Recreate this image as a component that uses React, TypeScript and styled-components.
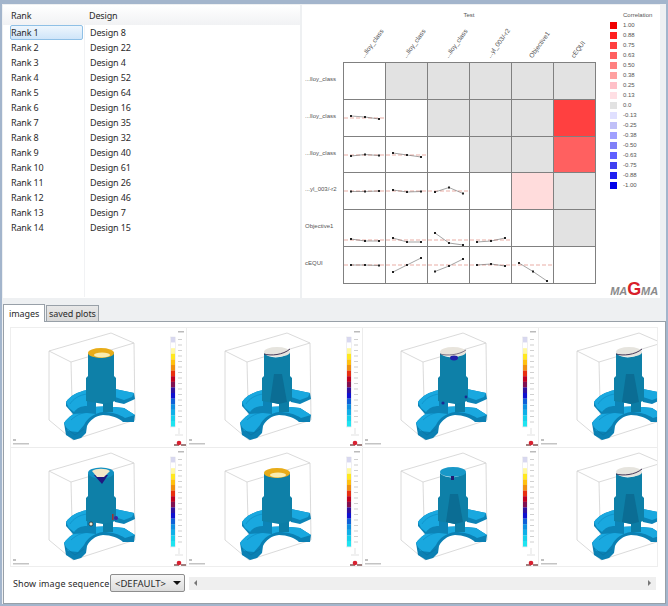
import React from 'react';
import styled, { createGlobalStyle } from 'styled-components';

const GlobalStyle = createGlobalStyle`
    html, body {
        margin: 0;
        padding: 0;
        background: #eef0f2;
    }
`;

const ranks = [8, 22, 4, 52, 64, 16, 35, 32, 40, 61, 26, 46, 7, 15];

const Window = styled.div`
    width: 668px;
    height: 606px;
    box-sizing: border-box;
    border: 2px solid #a3b5cc;
    border-top-width: 4px;
    background: #eef0f2;
    display: flex;
    flex-direction: column;
    font-family: 'Noto Sans', sans-serif;
    color: #2a2a2a;
    overflow: hidden;
`;

const TopRow = styled.div`
    display: flex;
    height: 293px;
    padding: 1px 6px 0 1px;
    gap: 2px;
`;

const TablePanel = styled.div`
    flex: 0 0 297px;
    background: #fff;
    font-size: 9px;
    letter-spacing: -0.15px;
`;

const HeaderRow = styled.div`
    display: flex;
    height: 20px;
    align-items: center;
    background: linear-gradient(#fff, #f1f2f4);
`;

const RankCell = styled.div`
    width: 82px;
    box-sizing: border-box;
    padding-left: 8px;
`;

const DesignCell = styled.div`
    flex: 1;
    padding-left: 4px;
`;

const Columns = styled.div`
    display: flex;
    height: 272px;
`;

const RankColumn = styled.div`
    width: 82px;
    border-right: 1px solid #f1f2f4;
    padding: 0 0 0 7px;
    box-sizing: border-box;
`;

const DesignColumn = styled.div`
    padding: 0 0 0 4px;
`;

const ListRow = styled.div<{ $selected?: boolean }>`
    height: 15px;
    box-sizing: border-box;
    width: 73px;
    padding-left: ${(p) => (p.$selected ? '0' : '1px')};
    border: ${(p) => (p.$selected ? '1px solid #8fc0e6' : 'none')};
    border-radius: 2px;
    background: ${(p) => (p.$selected ? 'linear-gradient(#eef6fd, #cfe5f9)' : 'transparent')};
    line-height: ${(p) => (p.$selected ? '13px' : '15px')};
`;

const ChartPanel = styled.div`
    flex: 1;
    min-width: 0;
    background: #fff;
    display: flex;
    font-family: 'Liberation Sans', sans-serif;
    font-size: 6px;
    color: #555;
`;

const MatrixArea = styled.div`
    flex: 0 0 304px;
    display: flex;
    flex-direction: column;
`;

const MatrixTitle = styled.div`
    height: 10px;
    padding-top: 5px;
    margin-left: 41px;
    width: 252px;
    text-align: center;
    line-height: 10px;
`;

const ColumnLabels = styled.div`
    display: flex;
    height: 42px;
    margin-left: 41px;
`;

const ColumnLabel = styled.div`
    width: 42px;
    display: flex;
    align-items: flex-end;
    padding: 0 0 3px 22px;
    box-sizing: border-box;
    white-space: nowrap;
`;

const RotatedText = styled.span`
    display: block;
    width: 0;
    font-size: 6.5px;
    line-height: 7px;
    transform-origin: 0 100%;
    transform: rotate(-54deg);
`;

const MatrixRow = styled.div`
    display: flex;
    height: 36.8px;
`;

const RowLabel = styled.div`
    width: 41px;
    padding: 14px 0 0 3px;
    box-sizing: border-box;
    line-height: 7px;
    white-space: nowrap;
`;

const Cell = styled.div<{ $fill: string }>`
    width: 43px;
    height: 37.8px;
    margin-right: -1px;
    box-sizing: border-box;
    border: 1px solid #808080;
    background: ${(p) => p.$fill};
`;

const LegendArea = styled.div`
    flex: 1;
    min-width: 0;
    display: flex;
    flex-direction: column;
    padding: 5px 0 0 4px;
`;

const LegendTitle = styled.div`
    height: 10px;
    line-height: 10px;
    padding-left: 13px;
`;

const LegendRow = styled.div`
    display: flex;
    align-items: center;
    height: 10px;
    gap: 6px;
`;

const Swatch = styled.div<{ $fill: string }>`
    width: 7px;
    height: 7px;
    background: ${(p) => p.$fill};
`;

const Logo = styled.div`
    margin-top: auto;
    align-self: flex-end;
    margin-right: 2px;
    font-family: 'Liberation Sans', sans-serif;
    font-weight: bold;
    font-style: italic;
    font-size: 11px;
    line-height: 14px;
    letter-spacing: -0.1px;
    white-space: nowrap;
    color: #8b8b8b;
`;

const LogoG = styled.span`
    color: #d8202a;
    font-size: 18px;
    font-style: normal;
`;

const TabStrip = styled.div`
    display: flex;
    align-items: flex-end;
    height: 23px;
    padding-left: 1px;
    gap: 1px;
    font-size: 9px;
    letter-spacing: -0.1px;
`;

const Tab = styled.div<{ $active?: boolean }>`
    height: ${(p) => (p.$active ? '18px' : '16px')};
    line-height: ${(p) => (p.$active ? '17px' : '15px')};
    box-sizing: border-box;
    padding: 0 ${(p) => (p.$active ? '5px' : '2px')};
    border: 1px solid #98a0a8;
    border-bottom: none;
    margin-bottom: ${(p) => (p.$active ? '-1px' : '0')};
    position: relative;
    background: ${(p) => (p.$active ? '#fff' : 'linear-gradient(#e8e8e8, #d8d8d8)')};
`;

const TabBody = styled.div`
    flex: 1;
    margin: 0 0 0 1px;
    background: #fff;
    border: 1px solid #98a0a8;
    padding: 5px 6px 0 6px;
    display: flex;
    flex-direction: column;
`;

const Viewport = styled.div`
    width: 648px;
    height: 240px;
    overflow: hidden;
    display: grid;
    grid-template-columns: repeat(4, 176px);
    grid-template-rows: repeat(2, 120px);
    border: 1px solid #eeeeee;
    box-sizing: border-box;
`;

const Thumb = styled.svg`
    display: block;
    filter: blur(0.35px);
`;

const ControlRow = styled.div`
    display: flex;
    align-items: center;
    height: 18px;
    margin-top: 7px;
    padding-left: 3px;
    font-size: 9.5px;
`;

const SequenceLabel = styled.div`
    width: 97px;
    white-space: nowrap;
    font-size: 9px;
    letter-spacing: 0.1px;
`;

const Select = styled.div`
    width: 75px;
    height: 18px;
    box-sizing: border-box;
    border: 1px solid #8d8d8d;
    border-radius: 2px;
    background: linear-gradient(#f6f6f6, #dcdcdc);
    display: flex;
    align-items: center;
    justify-content: space-between;
    padding: 0 3px 0 4px;
`;

const SelectArrow = styled.span`
    border: 4px solid transparent;
    border-top: 4px solid #111;
    border-bottom: none;
`;

const ScrollBar = styled.div`
    width: 467px;
    height: 13px;
    margin-left: 4px;
    background: #efefef;
    display: flex;
    align-items: center;
    justify-content: space-between;
    padding: 0 5px;
    box-sizing: border-box;
`;

const ArrowLeft = styled.span`
    border: 3px solid transparent;
    border-right: 3px solid #777;
    border-left: none;
`;

const ArrowRight = styled.span`
    border: 3px solid transparent;
    border-left: 3px solid #777;
    border-right: none;
`;

const legend = [
    ['1.00', '#f00000'], ['0.88', '#ff2020'], ['0.75', '#ff4040'], ['0.63', '#ff6060'],
    ['0.50', '#ff8080'], ['0.38', '#ffa0a0'], ['0.25', '#ffc0c8'], ['0.13', '#ffdfe4'],
    ['0.0', '#e2e2e2'], ['-0.13', '#e0e0ff'], ['-0.25', '#c0c0f8'], ['-0.38', '#a0a0ff'],
    ['-0.50', '#8080f8'], ['-0.63', '#6060ff'], ['-0.75', '#4040f0'], ['-0.88', '#2020f0'],
    ['-1.00', '#0000e8'],
];

const columnNames = ['...lloy_class', '...lloy_class', '...lloy_class', '...yl_003/-r2', 'Objective1', 'cEQUI'];
const rowNames = ['...lloy_class', '...lloy_class', '...lloy_class', '...yl_003/-r2', 'Objective1', 'cEQUI'];

// mean line and three sample values for each filled plot, keyed "row-col"
const plots: Record<string, { mean: number; pts: number[] }> = {
    '1-0': { mean: 18, pts: [16, 17, 19] },
    '2-0': { mean: 18, pts: [19, 17.5, 18.5] },
    '2-1': { mean: 18, pts: [16, 18, 20] },
    '3-0': { mean: 18, pts: [18.5, 18.5, 18] },
    '3-1': { mean: 18, pts: [17, 19, 18.5] },
    '3-2': { mean: 18, pts: [19, 14.5, 20.5] },
    '4-0': { mean: 30, pts: [29, 31, 31] },
    '4-1': { mean: 30, pts: [28, 32, 32] },
    '4-2': { mean: 30, pts: [23, 33, 35] },
    '4-3': { mean: 30, pts: [32, 31, 28] },
    '5-0': { mean: 18, pts: [18, 18, 18.5] },
    '5-1': { mean: 18, pts: [25, 18, 11] },
    '5-2': { mean: 18, pts: [24.5, 19, 12] },
    '5-3': { mean: 18, pts: [18, 17, 19] },
    '5-4': { mean: 18, pts: [16, 24.5, 34] },
};

const heat: Record<string, string> = {
    '1-5': '#ff4040',
    '2-5': '#ff6060',
    '3-4': '#ffdcdc',
};

const cellFill = (r: number, c: number) => {
    if (heat[`${r}-${c}`]) return heat[`${r}-${c}`];
    return c > r ? '#e2e2e2' : '#fff';
};

const Sparkline = ({ mean, pts }: { mean: number; pts: number[] }) => {
    const xs = [7, 21, 35];
    return (
        <svg width="41" height="36" viewBox="0 0 41 36" style={{ display: 'block' }}>
            <line x1="0" x2="41" y1={mean} y2={mean} stroke="#e08a80" strokeWidth="0.7" strokeDasharray="4 2" />
            <polyline
                points={pts.map((y, i) => `${xs[i]},${y}`).join(' ')}
                fill="none"
                stroke="#666"
                strokeWidth="0.6"
            />
            {pts.map((y, i) => (
                <rect key={i} x={xs[i] - 1} y={y - 1} width="2" height="2" fill="#222" />
            ))}
        </svg>
    );
};

type TopKind = 'gold' | 'rim' | 'drip' | 'funnel' | 'spot';

const barStops = [
    '#d8d8f0', '#ffffff', '#fff8a0', '#ffe820', '#ffc010', '#f09010', '#e83010', '#c00020',
    '#801050', '#3010a0', '#1010d0', '#1060d8', '#1090e0', '#10b0e8', '#18d0ec', '#20e4f0',
];

const Casting = ({ top }: { top: TopKind }) => (
    <g>
        {/* wire frame */}
        <g fill="none" stroke="#d0d0d0" strokeWidth="0.8">
            <path d="M38 23 L100 5 L123 15 L60 34 Z" />
            <path d="M38 23 L38 92 L62 112 L124 92 L123 15" />
            <path d="M60 34 L62 112" />
        </g>
        {/* lower flange */}
        <path d="M53 95 C58 88 64 85 70 82 C80 78 92 78 103 79 L113 80 L124 87 L123 94 L112 94 C108 90 100 87 92 87 C84 88 79 92 76 98 L75 105 L70 110 L63 112 L55 107 Z" fill="#0b80b3" />
        <path d="M53 95 C58 88 64 85 70 82 C80 78 92 78 103 79 L113 80 L124 87 L114 90 C108 86 100 84 92 84 C84 85 76 90 73 97 L67 104 L57 103 Z" fill="#19a8df" />
        <path d="M55 100 L64 107 L73 101" fill="none" stroke="#0a74a4" strokeWidth="0.7" />
        <path d="M60 92 C66 86 74 84 82 83" fill="none" stroke="#0f90c8" strokeWidth="0.8" />
        {/* upper flange */}
        <path d="M55 74 C59 68 66 64 76 62 L85 62 L85 86 L76 85 L62 86 L55 78 Z" fill="#0c83b6" />
        <path d="M55 74 C59 68 66 64 76 62 L76 78 C70 78 66 80 63 84 L58 80 Z" fill="#19a8df" />
        <path d="M59 76 C62 71 68 67 76 66" fill="none" stroke="#0f90c8" strokeWidth="0.8" />
        <path d="M104 61 L123 65 L124 71 L113 76 L104 74 Z" fill="#0c83b6" />
        <path d="M104 61 L123 65 L121 69 L113 72 L104 69 Z" fill="#19a8df" />
        {/* stem and hub */}
        <rect x="92" y="72" width="10" height="12" fill="#0c7da6" />
        <path d="M75 50 L77 48 L77 25 C82 31 96 31 103 24 L103 48 L105 50 L105 73 L92 76 L75 73 Z" fill="#0e80a8" />
        {(top === 'rim' || top === 'spot') && <path d="M83 74 L87 46 L95 46 L100 74 L92 76 Z" fill="#0b6d94" />}
        {/* riser top */}
        {top === 'gold' && (
            <g>
                <ellipse cx="90" cy="25" rx="13" ry="5" fill="#e8ac18" />
                <ellipse cx="91" cy="27" rx="8" ry="2.4" fill="#f8ecb0" />
            </g>
        )}
        {top === 'rim' && (
            <g>
                <ellipse cx="90" cy="24" rx="13" ry="5" fill="#e6e4de" />
                <path d="M77 26 C84 28 96 27 103 21" fill="none" stroke="#33254a" strokeWidth="0.9" />
            </g>
        )}
        {top === 'drip' && (
            <g>
                <ellipse cx="90" cy="24" rx="13" ry="5" fill="#e8e4dc" />
                <path d="M77 26 C84 28 96 27 103 22" fill="none" stroke="#4a4060" strokeWidth="0.7" />
                <ellipse cx="91" cy="30" rx="4" ry="2.4" fill="#2020a8" />
                <circle cx="80" cy="75" r="1.6" fill="#1c2a90" />
                <circle cx="103" cy="69" r="1.4" fill="#1c2a90" />
            </g>
        )}
        {top === 'funnel' && (
            <g>
                <ellipse cx="90" cy="25" rx="13" ry="5.5" fill="#1190c2" />
                <path d="M83 27 L97 27 L91 36 Z" fill="#201880" />
                <path d="M81 23 C85 20 95 20 99 23 L93 29 L86 29 Z" fill="#f4e8c8" />
                <circle cx="80" cy="76" r="2" fill="#efe6d0" stroke="#222" strokeWidth="0.7" />
                <circle cx="105" cy="70" r="2" fill="#3828a0" />
                <rect x="101" y="66" width="1.5" height="6" fill="#a03030" />
            </g>
        )}
        {top === 'spot' && (
            <g>
                <ellipse cx="90" cy="24" rx="13" ry="5" fill="#1898c8" />
                <rect x="88" y="28" width="3" height="4" fill="#221a70" />
            </g>
        )}
    </g>
);

const Thumbnail = ({ top }: { top: TopKind }) => (
    <Thumb width="176" height="120" viewBox="0 0 176 120">
        <Casting top={top} />
        {/* colour bar */}
        {barStops.map((c, i) => (
            <rect key={c} x="160" y={9 + i * 5.6} width="4" height="5.7" fill={c} />
        ))}
        <rect x="159.5" y="9" width="5" height="90" fill="none" stroke="#d8d8e0" strokeWidth="0.4" />
        <rect x="167" y="3" width="6" height="1.5" fill="#bbb" />
        {barStops.map((c, i) => (
            <rect key={`t${c}`} x="167" y={11 + i * 5.5} width="4" height="1" fill="#d0d0d0" />
        ))}
        {/* axis cross */}
        <path d="M168 100 L168 106 M164 107 L172 107" stroke="#ccc" strokeWidth="0.6" fill="none" />
        {/* footer: small caption and logo */}
        <rect x="2" y="111" width="3" height="2" fill="#c0c0c0" />
        <rect x="2" y="115" width="16" height="1.5" fill="#c4c4c4" />
        <rect x="163" y="116" width="5" height="2" fill="#a08080" />
        <circle cx="168" cy="115" r="2.3" fill="#d82030" />
        <rect x="170" y="116" width="5" height="2" fill="#a08080" />
        {/* frame lines between pictures */}
        <path d="M175.5 0 L175.5 119.5 L0 119.5" stroke="#ececec" fill="none" />
    </Thumb>
);

const thumbs: TopKind[] = ['gold', 'rim', 'drip', 'rim', 'funnel', 'gold', 'spot', 'rim'];

const App = () => (
    <Window>
        <GlobalStyle />
        <TopRow>
            <TablePanel>
                <HeaderRow>
                    <RankCell>Rank</RankCell>
                    <DesignCell>Design</DesignCell>
                </HeaderRow>
                <Columns>
                    <RankColumn>
                        {ranks.map((_, i) => (
                            <ListRow key={i} $selected={i === 0}>Rank {i + 1}</ListRow>
                        ))}
                    </RankColumn>
                    <DesignColumn>
                        {ranks.map((d) => (
                            <ListRow key={d}>Design {d}</ListRow>
                        ))}
                    </DesignColumn>
                </Columns>
            </TablePanel>
            <ChartPanel>
                <MatrixArea>
                    <MatrixTitle>Test</MatrixTitle>
                    <ColumnLabels>
                        {columnNames.map((n, i) => (
                            <ColumnLabel key={i}><RotatedText>{n}</RotatedText></ColumnLabel>
                        ))}
                    </ColumnLabels>
                    {rowNames.map((n, r) => (
                        <MatrixRow key={r}>
                            <RowLabel>{n}</RowLabel>
                            {columnNames.map((_, c) => (
                                <Cell key={c} $fill={cellFill(r, c)}>
                                    {plots[`${r}-${c}`] && <Sparkline {...plots[`${r}-${c}`]} />}
                                </Cell>
                            ))}
                        </MatrixRow>
                    ))}
                </MatrixArea>
                <LegendArea>
                    <LegendTitle>Correlation</LegendTitle>
                    {legend.map(([label, fill]) => (
                        <LegendRow key={label}>
                            <Swatch $fill={fill} />
                            {label}
                        </LegendRow>
                    ))}
                    <Logo>MA<LogoG>G</LogoG>MA</Logo>
                </LegendArea>
            </ChartPanel>
        </TopRow>
        <TabStrip>
            <Tab $active>images</Tab>
            <Tab>saved plots</Tab>
        </TabStrip>
        <TabBody>
            <Viewport>
                {thumbs.map((t, i) => (
                    <Thumbnail key={i} top={t} />
                ))}
            </Viewport>
            <ControlRow>
                <SequenceLabel>Show image sequence</SequenceLabel>
                <Select>&lt;DEFAULT&gt;<SelectArrow /></Select>
                <ScrollBar>
                    <ArrowLeft />
                    <ArrowRight />
                </ScrollBar>
            </ControlRow>
        </TabBody>
    </Window>
);

export default App;
